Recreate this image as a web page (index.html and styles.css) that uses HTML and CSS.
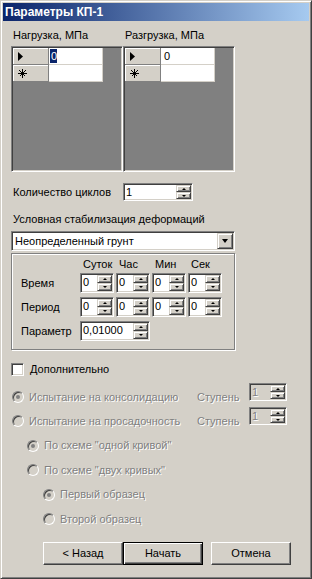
FILE: index.html
```html
<!DOCTYPE html>
<html lang="ru">
<head>
    <meta charset="UTF-8">
    <meta name="viewport" content="width=device-width, initial-scale=1.0">
    <title>Параметры КП-1</title>
    <link rel="stylesheet" href="styles.css">
</head>
<body>
<div class="window">
    <div class="titlebar">Параметры КП-1</div>
    <div class="content">

        <!-- таблицы нагрузки / разгрузки -->
        <div class="grids">
            <div class="gridcol">
                <div class="caption">Нагрузка, МПа</div>
                <div class="grid">
                    <div class="grow">
                        <div class="ind"><svg width="6" height="9" viewBox="0 0 6 9"><polygon points="0,0 5,4.5 0,9" fill="#000"/></svg></div>
                        <div class="gcell"><span class="sel">0</span></div>
                    </div>
                    <div class="grow">
                        <div class="ind"><svg width="9" height="9" viewBox="0 0 9 9" shape-rendering="crispEdges"><path d="M4.5 0V9M0 4.5H9M1.5 1.5L7.5 7.5M7.5 1.5L1.5 7.5" stroke="#000" stroke-width="1" fill="none"/></svg></div>
                        <div class="gcell"></div>
                    </div>
                </div>
            </div>
            <div class="gridcol">
                <div class="caption">Разгрузка, МПа</div>
                <div class="grid">
                    <div class="grow">
                        <div class="ind"><svg width="6" height="9" viewBox="0 0 6 9"><polygon points="0,0 5,4.5 0,9" fill="#000"/></svg></div>
                        <div class="gcell"><span class="val">0</span></div>
                    </div>
                    <div class="grow">
                        <div class="ind"><svg width="9" height="9" viewBox="0 0 9 9" shape-rendering="crispEdges"><path d="M4.5 0V9M0 4.5H9M1.5 1.5L7.5 7.5M7.5 1.5L1.5 7.5" stroke="#000" stroke-width="1" fill="none"/></svg></div>
                        <div class="gcell"></div>
                    </div>
                </div>
            </div>
        </div>

        <div class="countrow">
            <span class="countlabel">Количество циклов</span>
            <div class="spin w70 h18"><span class="sval">1</span><div class="sbtns"><div class="up"></div><div class="dn"></div></div></div>
        </div>

        <div class="caption cond">Условная стабилизация деформаций</div>
        <div class="combo">
            <span class="comboval">Неопределенный грунт</span>
            <div class="dropbtn"></div>
        </div>

        <div class="group">
            <div class="trow head">
                <span class="tlabel"></span>
                <span class="tcol">Суток</span>
                <span class="tcol">Час</span>
                <span class="tcol">Мин</span>
                <span class="tcol">Сек</span>
            </div>
            <div class="trow">
                <span class="tlabel">Время</span>
                <div class="spin w34"><span class="sval">0</span><div class="sbtns"><div class="up"></div><div class="dn"></div></div></div>
                <div class="spin w34"><span class="sval">0</span><div class="sbtns"><div class="up"></div><div class="dn"></div></div></div>
                <div class="spin w34"><span class="sval">0</span><div class="sbtns"><div class="up"></div><div class="dn"></div></div></div>
                <div class="spin w34"><span class="sval">0</span><div class="sbtns"><div class="up"></div><div class="dn"></div></div></div>
            </div>
            <div class="trow">
                <span class="tlabel">Период</span>
                <div class="spin w34"><span class="sval">0</span><div class="sbtns"><div class="up"></div><div class="dn"></div></div></div>
                <div class="spin w34"><span class="sval">0</span><div class="sbtns"><div class="up"></div><div class="dn"></div></div></div>
                <div class="spin w34"><span class="sval">0</span><div class="sbtns"><div class="up"></div><div class="dn"></div></div></div>
                <div class="spin w34"><span class="sval">0</span><div class="sbtns"><div class="up"></div><div class="dn"></div></div></div>
            </div>
            <div class="trow">
                <span class="tlabel">Параметр</span>
                <div class="spin w70"><span class="sval">0,01000</span><div class="sbtns"><div class="up"></div><div class="dn"></div></div></div>
            </div>
        </div>

        <div class="check"><span class="box"></span><span>Дополнительно</span></div>

        <div class="optrow">
            <span class="radio on"></span>
            <span class="opttext off">Испытание на консолидацию</span>
            <span class="steplabel off">Ступень</span>
            <div class="spin w38 h18 disabled"><span class="sval off">1</span><div class="sbtns"><div class="up"></div><div class="dn"></div></div></div>
        </div>
        <div class="optrow">
            <span class="radio"></span>
            <span class="opttext off">Испытание на просадочность</span>
            <span class="steplabel off">Ступень</span>
            <div class="spin w38 h18 disabled"><span class="sval off">1</span><div class="sbtns"><div class="up"></div><div class="dn"></div></div></div>
        </div>

        <div class="subrow lvl1 h25"><span class="radio on"></span><span class="off">По схеме "одной кривой"</span></div>
        <div class="subrow lvl1 h24"><span class="radio"></span><span class="off">По схеме "двух кривых"</span></div>
        <div class="subrow lvl2 h25"><span class="radio on"></span><span class="off">Первый образец</span></div>
        <div class="subrow lvl2 h24"><span class="radio"></span><span class="off">Второй образец</span></div>

        <div class="buttons">
            <button class="btn">&lt; Назад</button>
            <button class="btn default">Начать</button>
            <button class="btn cancel">Отмена</button>
        </div>
    </div>
</div>
</body>
</html>
```

FILE: styles.css
```css
body{
    margin:0;
    font-family:"Liberation Sans", Arial, sans-serif;
    font-size:11px;
    line-height:13px;
    color:#000;
    background:#D4D0C8;
}
.window{
    width:312px;
    height:579px;
    box-sizing:border-box;
    background:#D4D0C8;
    border:1px solid;
    border-color:#D4D0C8 #404040 #404040 #D4D0C8;
    box-shadow:inset 1px 1px #fff, inset -1px -1px #808080;
    padding:2px;
}
.titlebar{
    height:18px;
    line-height:18px;
    padding-left:2px;
    font-size:12px;
    font-weight:bold;
    color:#fff;
    background:linear-gradient(to right, #0A246A, #A6CAF0);
}
.content{
    padding:0 8px;
}

/* таблицы */
.grids{
    display:flex;
}
.gridcol{
    width:112px;
}
.caption{
    padding-left:2px;
    height:13px;
    margin-top:8px;
    white-space:nowrap;
}
.grid{
    margin-top:4px;
    height:126px;
    box-sizing:border-box;
    background:#808080;
    border:1px solid;
    border-color:#808080 #fff #fff #808080;
    box-shadow:inset 1px 1px #404040, inset -1px -1px #D4D0C8;
    padding:1px;
}
.grow{
    display:flex;
    height:17px;
}
.ind{
    width:36px;
    box-sizing:border-box;
    background:#D4D0C8;
    border-right:1px solid #808080;
    border-bottom:1px solid #808080;
    box-shadow:inset 1px 1px #fff;
    display:flex;
    align-items:center;
    padding-left:5px;
}
.gcell{
    width:54px;
    box-sizing:border-box;
    background:#fff;
    border-right:1px solid #D4D0C8;
    border-bottom:1px solid #D4D0C8;
    padding-left:1px;
    line-height:16px;
}
.sel{
    display:inline-block;
    vertical-align:top;
    margin-top:1px;
    padding:0 0 0 1px;
    background:#0A246A;
    color:#fff;
    line-height:14px;
}
.val{
    padding-left:2px;
}

/* счётчик */
.countrow{
    display:flex;
    align-items:center;
    margin-top:11px;
}
.countlabel{
    width:112px;
    padding-left:2px;
    box-sizing:border-box;
}
.spin{
    display:flex;
    height:20px;
    box-sizing:border-box;
    background:#fff;
    border:1px solid;
    border-color:#808080 #fff #fff #808080;
    box-shadow:inset 1px 1px #404040, inset -1px -1px #D4D0C8;
    padding:1px;
}
.spin.h18{ height:18px; }
.w34{ width:34px; }
.w38{ width:38px; }
.w70{ width:70px; }
.sval{
    flex:1;
    padding-left:1px;
    line-height:15px;
    overflow:hidden;
}
.sbtns{
    width:15px;
    display:flex;
    flex-direction:column;
}
.sbtns div{
    flex:1;
    box-sizing:border-box;
    background:#D4D0C8;
    border:1px solid;
    border-color:#D4D0C8 #404040 #404040 #D4D0C8;
    box-shadow:inset 1px 1px #fff, inset -1px -1px #808080;
    display:flex;
    align-items:center;
    justify-content:center;
}
.sbtns .up::after{
    content:"";
    border-left:2px solid transparent;
    border-right:2px solid transparent;
    border-bottom:2px solid #000;
}
.sbtns .dn::after{
    content:"";
    border-left:2px solid transparent;
    border-right:2px solid transparent;
    border-top:2px solid #000;
}
.disabled{
    background:#D4D0C8;
}

/* комбобокс */
.cond{
    margin-top:12px;
}
.combo{
    margin-top:5px;
    width:224px;
    height:20px;
    box-sizing:border-box;
    display:flex;
    background:#fff;
    border:1px solid;
    border-color:#808080 #fff #fff #808080;
    box-shadow:inset 1px 1px #404040, inset -1px -1px #D4D0C8;
    padding:1px;
}
.comboval{
    flex:1;
    padding-left:2px;
    line-height:16px;
}
.dropbtn{
    width:16px;
    box-sizing:border-box;
    background:#D4D0C8;
    border:1px solid;
    border-color:#D4D0C8 #404040 #404040 #D4D0C8;
    box-shadow:inset 1px 1px #fff, inset -1px -1px #808080;
    display:flex;
    align-items:center;
    justify-content:center;
}
.dropbtn::after{
    content:"";
    border-left:3.5px solid transparent;
    border-right:3.5px solid transparent;
    border-top:4px solid #000;
}

/* группа времени */
.group{
    margin-top:2px;
    height:97px;
    width:224px;
    box-sizing:border-box;
    border:1px solid #808080;
    box-shadow:inset 1px 1px #fff, 1px 1px #fff;
    padding:4px 0 0 9px;
}
.trow{
    display:flex;
    align-items:center;
    gap:2px;
    margin-top:4px;
}
.trow.head{
    margin-top:0;
    margin-bottom:-2px;
}
.tlabel{
    width:57px;
}
.tcol{
    width:31px;
    padding-left:3px;
}

/* флажок */
.check{
    display:flex;
    align-items:center;
    margin-top:13px;
    height:13px;
}
.box{
    width:13px;
    height:13px;
    box-sizing:border-box;
    background:#fff;
    border:1px solid;
    border-color:#808080 #fff #fff #808080;
    box-shadow:inset 1px 1px #404040, inset -1px -1px #D4D0C8;
    margin-right:6px;
}

/* переключатели */
.radio{
    position:relative;
    width:12px;
    height:12px;
    box-sizing:border-box;
    border-radius:50%;
    background:#D4D0C8;
    border:1px solid;
    border-color:#808080 #fff #fff #808080;
    box-shadow:inset 1px 1px #404040, inset -1px -1px #D4D0C8;
    margin-right:5px;
    flex:none;
}
.radio.on::after{
    content:"";
    position:absolute;
    left:3px;
    top:3px;
    width:4px;
    height:4px;
    border-radius:50%;
    background:#808080;
}
.off{
    color:#808080;
    text-shadow:1px 1px #fff;
}
.optrow{
    display:flex;
    align-items:flex-start;
    height:24px;
}
.check + .optrow{
    margin-top:7px;
}
.optrow .radio{
    margin-top:8px;
    margin-left:1px;
}
.opttext{
    width:168px;
    margin-top:8px;
    white-space:nowrap;
}
.steplabel{
    width:52px;
    margin-top:8px;
}
.subrow{
    display:flex;
    align-items:center;
}
.h25{ height:25px; }
.h24{ height:24px; }
.optrow + .subrow{
    margin-top:2px;
}
.lvl1{ padding-left:16px; }
.lvl2{ padding-left:32px; }

/* кнопки */
.buttons{
    display:flex;
    margin-top:11px;
    padding-left:32px;
}
.btn{
    width:80px;
    height:23px;
    box-sizing:border-box;
    font:inherit;
    color:#000;
    background:#D4D0C8;
    border:1px solid;
    border-color:#fff #404040 #404040 #fff;
    box-shadow:inset -1px -1px #808080, inset 1px 1px #D4D0C8;
    padding:0;
}
.btn.default{
    border-color:#000;
    box-shadow:inset 1px 1px #fff, inset -1px -1px #404040, inset -2px -2px #808080;
}
.btn.cancel{
    margin-left:8px;
}
```
